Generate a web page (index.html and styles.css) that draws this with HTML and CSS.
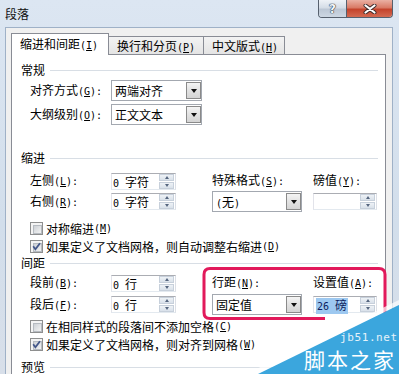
FILE: index.html
```html
<!DOCTYPE html>
<html lang="zh-CN">
<head>
<meta charset="utf-8">
<title>段落</title>
<link rel="stylesheet" href="styles.css">
</head>
<body>
<div class="window">
  <div class="titlebar">
    <span class="title">段落</span>
    <div class="caption">
      <div class="btn-help">?</div>
      <div class="btn-close">
        <svg width="14" height="10" viewBox="0 0 14 10">
          <path d="M2.5 1.5 L11.5 8.5 M11.5 1.5 L2.5 8.5" stroke="#3b2a2a" stroke-width="4" stroke-linecap="round"/>
          <path d="M2.5 1.5 L11.5 8.5 M11.5 1.5 L2.5 8.5" stroke="#ffffff" stroke-width="2.2" stroke-linecap="round"/>
        </svg>
      </div>
    </div>
  </div>
  <div class="dialog">
    <div class="tabs">
      <div class="tab tab1 active">缩进和间距<span class="k">(<u>I</u>)</span></div>
      <div class="tab tab2">换行和分页<span class="k">(<u>P</u>)</span></div>
      <div class="tab tab3">中文版式<span class="k">(<u>H</u>)</span></div>
    </div>
    <div class="panel">
      <div class="group">常规</div>
      <div class="form general">
        <div class="lbl">对齐方式<span class="k">(<u>G</u>):</span></div>
        <div class="select wide"><span class="val">两端对齐</span><span class="drop"></span></div>
        <div class="lbl">大纲级别<span class="k">(<u>O</u>):</span></div>
        <div class="select wide"><span class="val">正文文本</span><span class="drop"></span></div>
      </div>

      <div class="group g-indent">缩进</div>
      <div class="form quad">
        <div class="lbl">左侧<span class="k">(<u>L</u>):</span></div>
        <div class="spin"><span class="val"><span class="k">0 </span>字符</span><span class="arrows"><span class="up"></span><span class="down"></span></span></div>
        <div class="lbl">特殊格式<span class="k">(<u>S</u>):</span></div>
        <div class="lbl">磅值<span class="k">(<u>Y</u>):</span></div>

        <div class="lbl">右侧<span class="k">(<u>R</u>):</span></div>
        <div class="spin"><span class="val"><span class="k">0 </span>字符</span><span class="arrows"><span class="up"></span><span class="down"></span></span></div>
        <div class="select narrow"><span class="val"><span class="k">(</span>无<span class="k">)</span></span><span class="drop"></span></div>
        <div class="spin short"><span class="val"></span><span class="arrows"><span class="up"></span><span class="down"></span></span></div>
      </div>
      <div class="check c1"><span class="cb"></span>对称缩进<span class="k">(<u>M</u>)</span></div>
      <div class="check c2"><span class="cb"><svg viewBox="0 0 13 13" width="13" height="13"><path d="M3.2 6.3 L5.4 9.2 L10 3.2" fill="none" stroke="#43578a" stroke-width="1.8"/></svg></span>如果定义了文档网格，则自动调整右缩进<span class="k">(<u>D</u>)</span></div>

      <div class="group g-spacing">间距</div>
      <div class="form quad spacing">
        <div class="lbl">段前<span class="k">(<u>B</u>):</span></div>
        <div class="spin"><span class="val"><span class="k">0 </span>行</span><span class="arrows"><span class="up"></span><span class="down"></span></span></div>
        <div class="lbl">行距<span class="k">(<u>N</u>):</span></div>
        <div class="lbl">设置值<span class="k">(<u>A</u>):</span></div>

        <div class="lbl">段后<span class="k">(<u>F</u>):</span></div>
        <div class="spin"><span class="val"><span class="k">0 </span>行</span><span class="arrows"><span class="up"></span><span class="down"></span></span></div>
        <div class="select narrow"><span class="val">固定值</span><span class="drop"></span></div>
        <div class="spin short"><span class="val"><span class="hl"><span class="k">26 </span>磅</span></span><span class="arrows"><span class="up"></span><span class="down"></span></span></div>
      </div>
      <div class="check c3"><span class="cb"></span>在相同样式的段落间不添加空格<span class="k">(<u>C</u>)</span></div>
      <div class="check c4"><span class="cb"><svg viewBox="0 0 13 13" width="13" height="13"><path d="M3.2 6.3 L5.4 9.2 L10 3.2" fill="none" stroke="#43578a" stroke-width="1.8"/></svg></span>如果定义了文档网格，则对齐到网格<span class="k">(<u>W</u>)</span></div>

      <div class="group g-preview">预览</div>
    </div>
  </div>
</div>

<svg class="overlay" width="399" height="374" viewBox="0 0 399 374">
  <path d="M325 318.5 L210 318.5 Q204 318.5 204 312.5 L204 274.5 Q204 268.5 210 268.5 L379 268.5 Q385 268.5 385 274.5 L385 313" fill="none" stroke="#e2195b" stroke-width="3"/>
  <polygon points="246,374 399,300 399,305 258,374" fill="#ffffff" opacity="0.7"/>
  <polygon points="258,374 399,305 399,374" fill="#3ba6dd"/>
  <text x="340" y="341" class="wm-url">jb51.net</text>
  <text x="304" y="368" class="wm-name">脚本之家</text>
</svg>
</body>
</html>
```
FILE: styles.css
```css
* { box-sizing: border-box; margin: 0; padding: 0; }
html, body { width: 399px; height: 374px; overflow: hidden; }
body {
  position: relative;
  font-family: "Noto Sans CJK SC", "Noto Sans", sans-serif;
  font-size: 12px;
  color: #000;
  background: #d6e1ee;
}
.k { font-family: "DejaVu Sans Mono", monospace; font-size: 10px; }
u { text-underline-offset: 1px; }

.window {
  height: 374px;
  display: flex;
  flex-direction: column;
  padding: 0 6px 0 5px;
  background: linear-gradient(#dce6f2, #d2deeb 60%, #d8dfe9);
}
.titlebar { height: 27px; flex: none; display: flex; align-items: flex-start; }
.title { margin-top: 8px; line-height: 12px; color: #111; }
.caption {
  margin-left: auto;
  display: flex;
  height: 18px;
  border: 1px solid #56606e;
  border-top: none;
  border-radius: 0 0 4px 4px;
  overflow: hidden;
}
.btn-help {
  width: 28px;
  border-right: 1px solid #56606e;
  background: linear-gradient(#eef2f7, #d5dde7 45%, #bcc7d5 55%, #cdd7e3);
  display: flex; align-items: center; justify-content: center;
  font-family: "DejaVu Sans", sans-serif;
  font-weight: bold;
  font-size: 12px;
  color: #f5f7fa;
  text-shadow: 0 0 1px #273444, 0 0 1px #273444, 0 0 1px #273444;
}
.btn-close {
  width: 45px;
  background: linear-gradient(#eab0a3, #d97a66 45%, #c4432c 55%, #d46a52);
  display: flex; align-items: center; justify-content: center;
}

.dialog {
  flex: 1;
  display: flex;
  flex-direction: column;
  background: #f0f0f0;
  border: 1px solid #9fb1c7;
  border-bottom: none;
  padding: 5px 6px 0 5px;
  overflow: hidden;
}
.tabs { display: flex; align-items: flex-end; flex: none; }
.tab {
  height: 18px;
  border: 1px solid #898c95;
  border-bottom: none;
  padding-left: 8px;
  line-height: 18px;
  background: linear-gradient(#f3f3f3, #e4e4e4);
  white-space: nowrap;
}
.tab.active {
  height: 22px;
  line-height: 20px;
  background: #fff;
  position: relative;
  z-index: 1;
  margin-bottom: -1px;
}
.tab1 { width: 98px; }
.tab2 { width: 96px; margin-left: -1px; }
.tab3 { width: 82px; margin-left: -1px; }

.panel {
  flex: none;
  height: 400px;
  background: #fff;
  border: 1px solid #898c95;
  padding: 7px 7px 0 9px;
}
.group {
  display: flex;
  align-items: center;
  height: 16px;
  line-height: 16px;
}
.group::after {
  content: "";
  flex: 1;
  height: 1px;
  margin-left: 5px;
  background: #d8dee5;
}
.g-indent { margin-top: 25px; }
.g-spacing { margin-top: 1px; }
.g-preview { margin-top: 7px; }

.form {
  display: grid;
  margin-left: 9px;
  align-items: center;
}
.general {
  grid-template-columns: 81px 91px;
  grid-template-rows: 21px 21px;
  row-gap: 3px;
  margin-top: 2px;
}
.quad {
  grid-template-columns: 81px 101px 101px 65px;
  grid-template-rows: 20px 21px;
  margin-top: 5px;
}
.quad.spacing { margin-top: 2px; row-gap: 1px; }
.lbl { line-height: 16px; white-space: nowrap; }

.select {
  display: flex;
  height: 21px;
  border: 1px solid #a3a8b0;
  background: #fff;
}
.select.wide { width: 91px; }
.select.narrow { width: 90px; }
.select .val { flex: 1; padding-left: 3px; line-height: 19px; white-space: nowrap; }
.select .drop {
  width: 15px;
  margin: 1px 0;
  border: 1px solid #8a8a8a;
  background: linear-gradient(#f4f4f4, #e2e2e2 50%, #d4d4d4);
  display: flex; align-items: center; justify-content: center;
}
.select .drop::before {
  content: "";
  border-left: 3.5px solid transparent;
  border-right: 3.5px solid transparent;
  border-top: 4px solid #111;
}

.spin {
  display: flex;
  width: 65px;
  height: 17px;
  border: 1px solid;
  border-color: #abadb3 #dbdfe6 #e3e9ef #e2e3ea;
  background: #fff;
}
.spin.short { width: 64px; }
.spin .val { flex: 1; padding-left: 1px; line-height: 15px; white-space: nowrap; }
.spin .arrows {
  width: 15px;
  margin-right: 1px;
  display: flex;
  flex-direction: column;
  justify-content: space-between;
}
.spin .up, .spin .down {
  height: 7px;
  background: linear-gradient(#eef2f6, #d9e1ea);
  border: 1px solid #c7d0db;
  display: flex; align-items: center; justify-content: center;
}
.spin .up::before {
  content: "";
  border-left: 2.5px solid transparent;
  border-right: 2.5px solid transparent;
  border-bottom: 3px solid #56667f;
}
.spin .down::before {
  content: "";
  border-left: 2.5px solid transparent;
  border-right: 2.5px solid transparent;
  border-top: 3px solid #56667f;
}
.hl {
  display: inline-block;
  margin-left: 1px;
  padding: 0 1px;
  line-height: 14px;
  background: #9dc8f0;
  color: #0d1d5c;
}

.check {
  display: flex;
  align-items: center;
  height: 16px;
  line-height: 15px;
  margin-left: 9px;
  white-space: nowrap;
}
.c1 { margin-top: 8px; }
.c2 { margin-top: 2px; }
.c3 { margin-top: 4px; height: 15px; }
.c4 { margin-top: 3px; height: 15px; }
.cb {
  position: relative;
  flex: none;
  width: 13px;
  height: 13px;
  margin-right: 3px;
  border: 1px solid #8e8f8f;
  background: #f4f4f4;
  padding: 2px;
}
.cb::before {
  content: "";
  display: block;
  width: 7px;
  height: 7px;
  border: 1px solid #b6bbc1;
  background: linear-gradient(135deg, #cdd1d6, #f3f3f3);
}
.cb svg { position: absolute; left: -1px; top: -1px; }

.overlay {
  position: absolute;
  left: 0;
  top: 0;
  pointer-events: none;
}
.wm-url {
  font-family: "DejaVu Sans Mono", monospace;
  font-size: 11px;
  letter-spacing: 0.6px;
  fill: #e6f2fa;
}
.wm-name {
  font-family: "Noto Sans CJK SC", sans-serif;
  font-size: 21px;
  letter-spacing: 2px;
  fill: #ffffff;
}
```
